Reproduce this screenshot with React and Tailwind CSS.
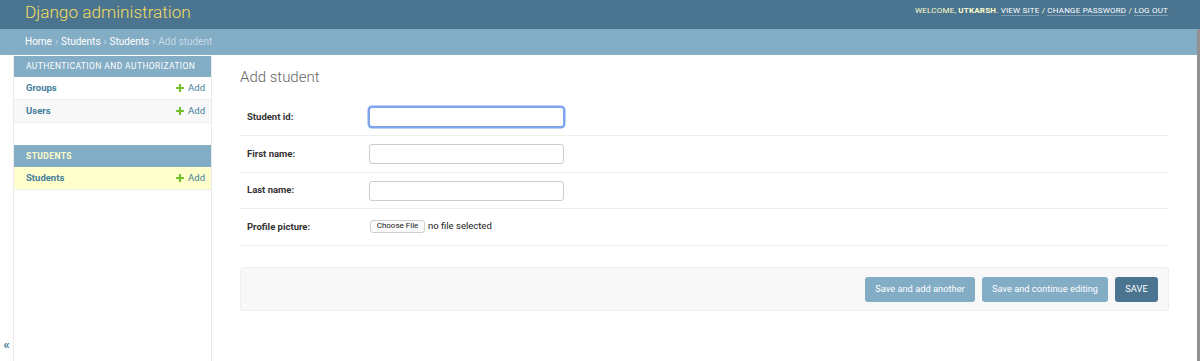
import React from 'react';

function AddIcon() {
  return (
    <svg width="10" height="10" viewBox="0 0 1792 1792">
      <path
        fill="#70bf2b"
        d="M1600 796v192q0 40-28 68t-68 28h-416v416q0 40-28 68t-68 28h-192q-40 0-68-28t-28-68v-416h-416q-40 0-68-28t-28-68v-192q0-40 28-68t68-28h416v-416q0-40 28-68t68-28h192q40 0 68 28t28 68v416h416q40 0 68 28t28 68z"
      />
    </svg>
  );
}

function NavRow({ label, className = '' }) {
  return (
    <div className={`h-[23px] flex items-center justify-between pl-[12px] pr-[6px] border-b border-[#eee] ${className}`}>
      <a className="text-[9.5px] font-bold text-[#447e9b] leading-none">{label}</a>
      <a className="flex items-center gap-[3px] text-[9.5px] text-[#447e9b] leading-none">
        <AddIcon />
        Add
      </a>
    </div>
  );
}

function FormRow({ label, height = 'h-[37px]', children }) {
  return (
    <div className={`${height} flex items-center pl-[7px] border-b border-[#eee]`}>
      <label className="w-[122px] text-[9.5px] font-bold text-[#333]">{label}</label>
      {children}
    </div>
  );
}

export default function App() {
  return (
    <div className="w-[1200px] h-[361px] overflow-hidden bg-white font-[Roboto,'Liberation_Sans',sans-serif]">
      {/* header */}
      <div className="h-[29px] bg-[#4a7490] flex items-start justify-between pl-[25px] pr-[32px]">
        <h1 className="mt-[4px] text-[17.2px] font-light leading-none text-[#f5dd5d]">Django administration</h1>
        <div className="mt-[7px] text-[8px] leading-none tracking-[0.2px] uppercase text-[#ffc]">
          Welcome, <strong className="font-bold">utkarsh</strong>.{' '}
          <a className="text-white border-b border-white/30">View site</a> /{' '}
          <a className="text-white border-b border-white/30">Change password</a> /{' '}
          <a className="text-white border-b border-white/30">Log out</a>
        </div>
      </div>

      <div className="flex h-[332px]">
        <div className="flex-1 flex flex-col">
          {/* breadcrumbs */}
          <div className="h-[26px] shrink-0 bg-[#83acc5] flex items-center pl-[25px] text-[10px] leading-none text-[#c4dce8]">
            <a className="text-white">Home</a>
            <span className="px-[3px]">›</span>
            <a className="text-white">Students</a>
            <span className="px-[3px]">›</span>
            <a className="text-white">Students</a>
            <span className="px-[3px]">›</span>
            <span>Add student</span>
          </div>

          <div className="flex flex-1">
            {/* sidebar toggle */}
            <div className="w-[14px] border-r border-[#eaeaea] flex flex-col justify-end items-center pb-[10px]">
              <span className="text-[13px] leading-none font-bold text-[#447e9b]">«</span>
            </div>

            {/* nav sidebar */}
            <div className="w-[198px] border-r border-[#eaeaea] pt-[1px]">
              <div className="mb-[22px]">
                <div className="h-[21px] bg-[#83acc5] flex items-center pl-[12px] text-[8.5px] tracking-[0.4px] uppercase text-white leading-none">
                  Authentication and Authorization
                </div>
                <NavRow label="Groups" />
                <NavRow label="Users" className="bg-[#f8f8f8]" />
              </div>
              <div>
                <div className="h-[22px] bg-[#83acc5] flex items-center pl-[12px] text-[8.5px] tracking-[0.4px] uppercase font-bold text-[#ffc] leading-none">
                  Students
                </div>
                <NavRow label="Students" className="bg-[#ffc]" />
              </div>
            </div>

            {/* main */}
            <div className="flex-1 px-[28px] pt-[15px]">
              <h1 className="text-[15px] font-light leading-none text-[#666] mb-[14px]">Add student</h1>

              <div>
                <FormRow label="Student id:">
                  <input
                    type="text"
                    className="w-[195px] h-[20px] rounded-[3px] border border-[#7ea5ee] ring-[1.5px] ring-[#7ea5ee] bg-white outline-none"
                  />
                </FormRow>
                <FormRow label="First name:">
                  <input type="text" className="w-[195px] h-[20px] rounded-[3px] border border-[#ccc] bg-white outline-none" />
                </FormRow>
                <FormRow label="Last name:" height="h-[36px]">
                  <input type="text" className="w-[195px] h-[20px] rounded-[3px] border border-[#ccc] bg-white outline-none" />
                </FormRow>
                <FormRow label="Profile picture:">
                  <div className="flex items-center gap-[3px] -mt-[2px]">
                    <span className="ml-[1px] h-[13px] w-[55px] flex items-center justify-center rounded-[3px] border border-[#cfcfcf] bg-[#fafafa] text-[8px] text-[#222] leading-none">
                      Choose File
                    </span>
                    <span className="text-[9.5px] text-[#222] leading-none">no file selected</span>
                  </div>
                </FormRow>
              </div>

              <div className="mt-[21px] h-[44px] rounded-[3px] border border-[#eee] bg-[#f8f8f8] flex items-center justify-end gap-[7px] pr-[10px]">
                <button className="w-[110px] h-[25px] rounded-[3px] bg-[#83acc5] text-white text-[9.3px] leading-none">
                  Save and add another
                </button>
                <button className="w-[126px] h-[25px] rounded-[3px] bg-[#83acc5] text-white text-[9.3px] leading-none">
                  Save and continue editing
                </button>
                <button className="w-[43px] h-[25px] rounded-[3px] bg-[#4a7490] text-white text-[9.3px] leading-none">
                  SAVE
                </button>
              </div>
            </div>
          </div>
        </div>
        <div className="w-[3px] bg-[#929292]" />
      </div>
    </div>
  );
}
